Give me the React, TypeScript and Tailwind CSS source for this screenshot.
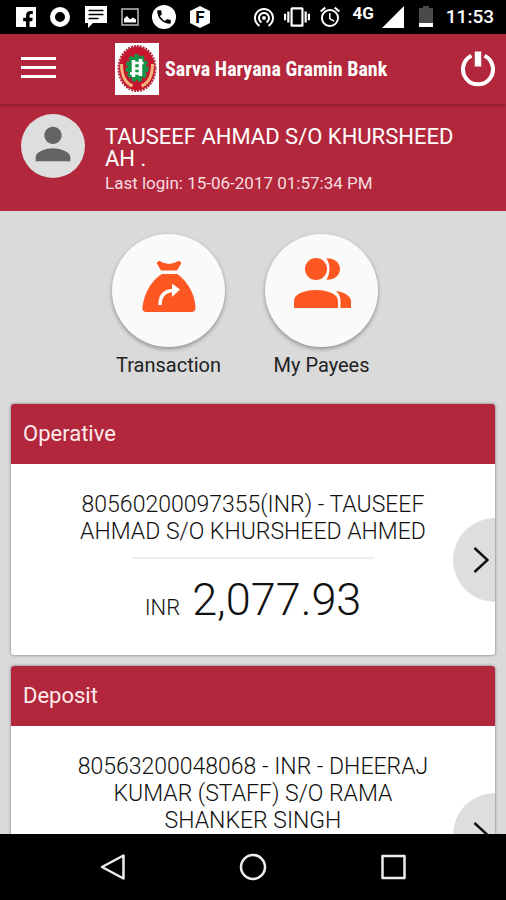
import type { ReactNode } from 'react'
import { FaFacebookF } from 'react-icons/fa'
import { MdAlarm, MdPerson, MdPhone, MdVibration, MdWifiTethering } from 'react-icons/md'

interface Account {
  type: string
  name: string
  currency?: string
  balance?: string
}

const accounts: Account[] = [
  {
    type: 'Operative',
    name: '80560200097355(INR) - TAUSEEF AHMAD S/O KHURSHEED AHMED',
    currency: 'INR',
    balance: '2,077.93',
  },
  {
    type: 'Deposit',
    name: '80563200048068 - INR - DHEERAJ KUMAR (STAFF) S/O RAMA SHANKER SINGH',
  },
]

function StatusBar() {
  return (
    <div className="flex h-[34px] shrink-0 items-center justify-between bg-black pl-4 pr-3 text-white">
      <div className="flex items-center gap-3">
        <span className="flex h-5 w-5 items-end justify-end overflow-hidden bg-white pr-0.5">
          <FaFacebookF className="-mb-0.5 h-[18px] w-3 text-black" />
        </span>
        <svg className="h-6 w-6" viewBox="0 0 24 24">
          <circle cx="12" cy="12" r="7.5" fill="none" stroke="currentColor" strokeWidth="5" />
        </svg>
        <svg className="h-6 w-6" viewBox="0 0 24 24">
          <path d="M1 1h22v17H9l-5 5v-5H1z" fill="currentColor" />
          <path d="M4.500 5.500h15M4.500 9.500h15M4.500 13.500h10" stroke="#000" strokeWidth="1.500" />
        </svg>
        <svg className="h-5 w-5" viewBox="0 0 20 20">
          <rect x="2" y="2" width="16" height="16" fill="none" stroke="#bbb" strokeWidth="1.500" />
          <path d="M4 15.500v-4l3-2.500 3 3.500 3-2 3 2v3z" fill="currentColor" />
        </svg>
        <span className="flex h-6 w-6 items-center justify-center rounded-full bg-white">
          <MdPhone className="h-[18px] w-[18px] text-black" />
        </span>
        <svg className="h-6 w-6" viewBox="0 0 24 24">
          <path d="M12 1l10 5v12l-10 5-10-5V6z" fill="currentColor" />
          <text x="12" y="18" textAnchor="middle" fontFamily="Roboto, sans-serif" fontWeight="700" fontSize="17" fill="#000">
            F
          </text>
        </svg>
      </div>
      <div className="flex items-center gap-2">
        <MdWifiTethering className="h-6 w-6" />
        <MdVibration className="h-[26px] w-[26px]" />
        <MdAlarm className="h-6 w-6" />
        <span className="mb-2 ml-0.5 text-[17px] leading-5 font-bold">4G</span>
        <svg className="h-[22px] w-[22px]" viewBox="0 0 22 22">
          <path d="M22 0v22H0z" fill="currentColor" />
        </svg>
        <svg className="ml-0.5 h-[22px] w-6" viewBox="0 0 24 22">
          <path d="M5 2h4V0h6v2h4v16H5z" fill="#4a4a4a" />
          <path d="M5 17h14v4H5z" fill="currentColor" />
        </svg>
        <span className="text-[19px] leading-6 font-medium">11:53</span>
      </div>
    </div>
  )
}

function BankLogo() {
  return (
    <svg className="h-[52px] w-11 shrink-0" viewBox="0 0 44 52" aria-hidden="true">
      <rect width="44" height="52" fill="#fff" />
      <ellipse cx="22" cy="25.500" rx="18" ry="22" fill="#c5162e" />
      <ellipse cx="22" cy="25.500" rx="18.500" ry="22.500" fill="none" stroke="#b3253a" strokeWidth="2" strokeDasharray="2 1" />
      <path d="M6.500 21c0 11 4 19 11 22M37.500 21c0 11-4 19-11 22" fill="none" stroke="#f3b27c" strokeWidth="3" />
      <ellipse cx="22" cy="25" rx="9.500" ry="12" fill="#149447" />
      <ellipse cx="22" cy="25" rx="9.500" ry="12" fill="none" stroke="#149447" strokeWidth="4" strokeDasharray="4 2" />
      <path d="M18.500 17v17M25.500 16v17" fill="none" stroke="#fff" strokeWidth="3.500" />
      <path d="M18 20h10.500M18.500 25.500h7M15 30.500h11" fill="none" stroke="#fff" strokeWidth="2.500" />
    </svg>
  )
}

function AppHeader() {
  return (
    <header className="relative z-10 flex h-[70px] shrink-0 items-center bg-[#b2273b] pr-2.5 pl-[21px] shadow-[0_1px_3px_rgba(0,0,0,0.3)]">
      <button type="button" aria-label="Menu" className="mb-1 flex w-[35px] flex-col gap-1.5">
        <span className="h-[3px] w-full bg-white" />
        <span className="h-[3px] w-full bg-white" />
        <span className="h-[3px] w-full bg-white" />
      </button>
      <div className="ml-[59px] flex flex-1 items-center gap-1.5">
        <BankLogo />
        <h1 className="font-['Roboto_Condensed',Roboto,sans-serif] text-xl leading-7 font-bold whitespace-nowrap">
          Sarva Haryana Gramin Bank
        </h1>
      </div>
      <button type="button" aria-label="Log out">
        <svg className="h-9 w-9" viewBox="0 0 36 36" fill="none" stroke="currentColor">
          <path d="M11.500 4.800a15 15 0 1 0 13 0" strokeWidth="4" />
          <path d="M18 0.500v15" strokeWidth="6.500" />
        </svg>
      </button>
    </header>
  )
}

function Profile() {
  return (
    <section className="flex h-[107px] shrink-0 items-start gap-5 bg-[#b2273b] px-[21px] pt-2.5">
      <span className="flex h-16 w-16 shrink-0 items-center justify-center rounded-full bg-[#dedede] pb-1">
        <MdPerson className="h-[52px] w-[52px] text-[#636363]" />
      </span>
      <div className="pt-3">
        <p className="text-[22px] leading-[22px]">TAUSEEF AHMAD S/O KHURSHEED AH .</p>
        <p className="mt-[3px] text-[17px] leading-5 text-[#f7dde0]">Last login: 15-06-2017 01:57:34 PM</p>
      </div>
    </section>
  )
}

function MoneyBagIcon() {
  return (
    <svg className="h-[54px] w-[54px]" viewBox="0 0 54 54">
      <path d="M16 1.500c2-1.500 4 1.500 6 1.500 2 0 3 1 5 1s3-1 5-1c2 0 4-3 6-1.500 1.500 1 1.300 2 .5 3L35 10.500H19L15.500 4.500c-.8-1-.8-2 .5-3z" fill="#fd5722" />
      <path d="M20 14h15c8 5 18 18 18.500 33.500.1 3-1.500 4.500-4 4.500h-45C2 52 0 50.500.500 47.500 2 32 11 19 20 14z" fill="#fd5722" />
      <path d="M18 45c0-9 4.500-14 13-14.500" fill="none" stroke="#fff" strokeWidth="3.500" />
      <path d="M30 23.500l8 6-8 7.500z" fill="#fff" />
    </svg>
  )
}

function PayeesIcon() {
  return (
    <svg className="h-[58px] w-[58px]" viewBox="0 0 58 58" fill="#fd5722">
      <circle cx="23" cy="11" r="11" />
      <path d="M33.500 0.300C41 0 47 4.500 47 11S41 22 33.500 21.700c4-7 4-14.500 0-21.400z" />
      <path d="M1 50v-7c0-7 10-11 22-11s22 4 22 11v7z" />
      <path d="M43 33c8 1 15 5 15 10v7H47.500v-7c0-4-1.500-7.500-4.500-10z" />
    </svg>
  )
}

function QuickAction({ label, children }: { label: string; children: ReactNode }) {
  return (
    <button type="button" className="flex w-[113px] flex-col items-center gap-1">
      <span className="flex h-[113px] w-[113px] items-center justify-center rounded-full bg-[#fafafa] pb-2 shadow-[0_2px_4px_rgba(0,0,0,0.35)]">
        {children}
      </span>
      <span className="text-xl leading-7 whitespace-nowrap text-[#222]">{label}</span>
    </button>
  )
}

function AccountCard({ account }: { account: Account }) {
  return (
    <article className="overflow-hidden rounded-[3px] bg-white shadow-[0_0_3px_rgba(0,0,0,0.5)]">
      <h2 className="bg-[#b2273b] px-3 py-4 text-[22px] leading-7 text-[#fdeaec]">{account.type}</h2>
      <div className="relative px-16 pt-[27px] pb-6 text-center text-[#111]">
        <p className="text-[23px] leading-[27px] font-light">{account.name}</p>
        <hr className="mx-auto mt-3 w-[242px] border-t-2 border-[#efefef]" />
        <p className="mt-3 flex h-[60px] items-baseline justify-center gap-3 leading-[58px]">
          <span className="text-[22px] font-light">{account.currency}</span>
          <span className="text-[45px] font-light">{account.balance}</span>
        </p>
        <button
          type="button"
          aria-label={`Open ${account.type}`}
          className="absolute top-1/2 right-0 flex h-[84px] w-[42px] -translate-y-1/2 items-center justify-end rounded-l-full bg-[#dedede] pr-1.5"
        >
          <svg className="h-[26px] w-4" viewBox="0 0 16 26" fill="none" stroke="#111" strokeWidth="2.500">
            <path d="M1.500 1l13 12-13 12" />
          </svg>
        </button>
      </div>
    </article>
  )
}

function NavigationBar() {
  return (
    <nav className="flex h-[66px] shrink-0 items-center justify-center gap-28 bg-black text-[#eee]">
      <button type="button" aria-label="Back">
        <svg className="h-7 w-7" viewBox="0 0 28 28" fill="none" stroke="currentColor" strokeWidth="2.500" strokeLinejoin="round">
          <path d="M24.500 2.500v23L3 14z" />
        </svg>
      </button>
      <button type="button" aria-label="Home">
        <svg className="h-7 w-7" viewBox="0 0 28 28" fill="none" stroke="currentColor" strokeWidth="2.500">
          <circle cx="14" cy="14" r="12" />
        </svg>
      </button>
      <button type="button" aria-label="Recent apps">
        <svg className="h-7 w-7" viewBox="0 0 28 28" fill="none" stroke="currentColor" strokeWidth="2.500" strokeLinejoin="round">
          <rect x="3.500" y="3" width="22" height="22" />
        </svg>
      </button>
    </nav>
  )
}

export default function App() {
  return (
    <div className="flex h-screen flex-col overflow-hidden bg-[#dadada] font-[Roboto,sans-serif] text-white">
      <StatusBar />
      <AppHeader />
      <Profile />
      <main className="min-h-0 flex-1 overflow-hidden">
        <div className="flex justify-center gap-10 pt-[23px] pr-4">
          <QuickAction label="Transaction">
            <MoneyBagIcon />
          </QuickAction>
          <QuickAction label="My Payees">
            <PayeesIcon />
          </QuickAction>
        </div>
        <div className="mt-[25px] flex flex-col gap-[11px] px-[11px]">
          {accounts.map((account) => (
            <AccountCard key={account.type} account={account} />
          ))}
        </div>
      </main>
      <NavigationBar />
    </div>
  )
}
